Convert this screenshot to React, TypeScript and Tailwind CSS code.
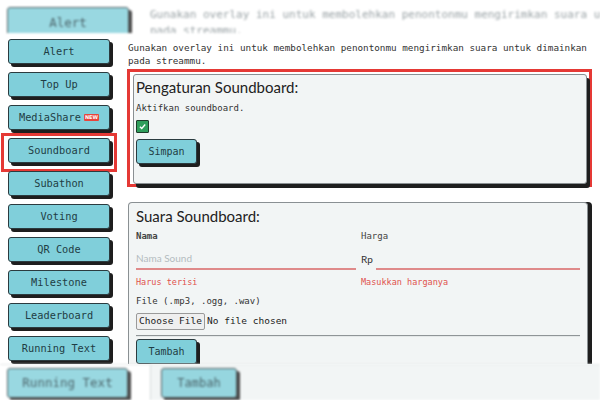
import React from "react";
import clsx from "clsx";

const mono = "font-['DejaVu_Sans_Mono','Liberation_Mono',monospace]";
const round = "font-['Lato','Noto_Sans',sans-serif]";

const menu = ["Alert", "Top Up", "MediaShare", "Soundboard", "Subathon", "Voting", "QR Code", "Milestone", "Leaderboard", "Running Text"];

function CyanButton({ children, className }: { children: React.ReactNode; className?: string }) {
  return (
    <div
      className={clsx(
        "flex items-center justify-center gap-[3px] rounded-[3px] border border-[#2b3b3f] bg-[#80cfda] text-[#1f3d44] shadow-[3px_3px_0_#1e1e1e]",
        className
      )}
    >
      {children}
    </div>
  );
}

function NewBadge() {
  return (
    <span className="rounded-[1px] bg-[#e8453c] px-[1px] text-[5px] font-bold leading-[7px] text-white font-['DejaVu_Sans',sans-serif]">
      NEW
    </span>
  );
}

export default function App() {
  return (
    <div className={clsx("flex h-[400px] w-[600px] flex-col overflow-hidden bg-white", mono)}>
      {/* blurred strip, top */}
      <div className="flex h-[33px] shrink-0 items-start gap-[21px] overflow-hidden pl-[7px] pt-[7px] blur-[1.2px]">
        <CyanButton className="h-[32px] w-[122px] shrink-0 text-[12.5px] opacity-80">Alert</CyanButton>
        <p className="whitespace-nowrap text-[11px] leading-[16px] text-[#9aa3a6]">
          Gunakan overlay ini untuk membolehkan penontonmu mengirimkan suara u
          <br />
          pada streammu.
        </p>
      </div>

      {/* page */}
      <div className="flex h-[331px] shrink-0 overflow-hidden">
        <nav className="flex w-[127px] shrink-0 flex-col gap-[8px] pl-[8px] pt-[6px] text-[10.3px]">
          {menu.map((item) =>
            item === "Soundboard" ? (
              <div key={item} className="-mb-[9px] -ml-[7px] -mt-[5px] w-[116px] border-[3px] border-[#e53935] pb-[6px] pl-[4px] pt-[2px]">
                <CyanButton className="h-[25px] w-[102px]">{item}</CyanButton>
              </div>
            ) : (
              <CyanButton key={item} className="h-[25px] w-[102px]">
                {item}
                {item === "MediaShare" && <NewBadge />}
              </CyanButton>
            )
          )}
        </nav>

        <main className="flex flex-1 flex-col pt-[9px] text-[#333]">
          <p className="pl-[1px] text-[9.3px] leading-[12.5px]">
            Gunakan overlay ini untuk membolehkan penontonmu mengirimkan suara untuk dimainkan
            <br />
            pada streammu.
          </p>

          {/* Pengaturan */}
          <div className="mt-[2px] w-[465px] border-[3px] border-[#e53935] pl-[3px] pt-[2px]">
            <div className="h-[110px] w-[454px] rounded-[3px] border border-[#8a9093] bg-[#f2f5f5] pl-[2px] pt-[3px] shadow-[3px_4px_0_#1e1e1e]">
              <h2 className={clsx("text-[15px] leading-[18px] text-[#222]", round)}>Pengaturan Soundboard:</h2>
              <p className="mt-[6px] text-[9px] leading-[12px]">Aktifkan soundboard.</p>
              <div className="mt-[6px] flex h-[13px] w-[13px] items-center justify-center rounded-[1px] border border-[#1d3b2a] bg-[#2f9e5b]">
                <svg viewBox="0 0 12 12" className="h-[9px] w-[9px]" fill="none" stroke="white" strokeWidth="1.8">
                  <path d="M2.5 6.3 5 8.6 9.6 3.4" />
                </svg>
              </div>
              <CyanButton className="mt-[6px] h-[25px] w-[61px] text-[10px]">Simpan</CyanButton>
            </div>
          </div>

          {/* Suara */}
          <div className="ml-[1px] mt-[15px] w-[460px] flex-1 rounded-t-[4px] border border-b-0 border-[#8a9093] bg-[#f2f5f5] pl-[7px] pr-[7px] pt-[4px] shadow-[4px_0_0_#1e1e1e]">
            <h2 className={clsx("text-[15px] leading-[18px] text-[#222]", round)}>Suara Soundboard:</h2>
            <div className="mt-[5px] grid grid-cols-2 gap-x-[4px]">
              <div>
                <p className="text-[9px] font-bold leading-[12px] text-[#444]">Nama</p>
                <div className={clsx("mt-[6px] flex h-[22px] items-center border-b-2 border-[#df8a8a] text-[10px] text-[#b4bcbf]", round)}>
                  Nama Sound
                </div>
                <p className="mt-[7px] text-[8.5px] leading-[11px] text-[#e0524d]">Harus terisi</p>
              </div>
              <div>
                <p className="pl-[1px] text-[9px] leading-[12px] text-[#444]">Harga</p>
                <div className={clsx("mt-[6px] flex h-[22px] items-center pl-[1px] text-[10px] text-[#333]", round)}>
                  <span className="w-[15px]">Rp</span>
                  <span className="h-full flex-1 border-b-2 border-[#df8a8a]" />
                </div>
                <p className="mt-[7px] pl-[1px] text-[8.5px] leading-[11px] text-[#e0524d]">Masukkan harganya</p>
              </div>
            </div>
            <p className="mt-[7px] text-[9px] leading-[12px]">File (.mp3, .ogg, .wav)</p>
            <div className="mt-[6px] flex items-center gap-[2px] text-[9.5px] text-[#222]">
              <span className="flex h-[17px] w-[69px] items-center justify-center rounded-[2px] border border-[#9a9a9a] bg-[#efefef]">
                Choose File
              </span>
              <span>No file chosen</span>
            </div>
            <div className="mt-[5px] h-[2px] border-t border-[#8f9597] bg-[#e4e8e8]" />
            <CyanButton className="mt-[2px] h-[25px] w-[61px] text-[10px]">Tambah</CyanButton>
          </div>
        </main>
      </div>

      {/* blurred strip, bottom */}
      <div className="flex h-[36px] shrink-0 overflow-hidden border-t border-[#e6eaea] blur-[1.2px]">
        <div className="w-[150px] shrink-0 pl-[7px] pt-[3px]">
          <CyanButton className="h-[30px] w-[121px] text-[12.5px] opacity-80">Running Text</CyanButton>
        </div>
        <div className="flex-1 border-l border-[#d5dbdc] bg-[#f2f5f5] pl-[10px] pt-[3px]">
          <CyanButton className="h-[30px] w-[76px] text-[12px] opacity-80">Tambah</CyanButton>
        </div>
      </div>
    </div>
  );
}
